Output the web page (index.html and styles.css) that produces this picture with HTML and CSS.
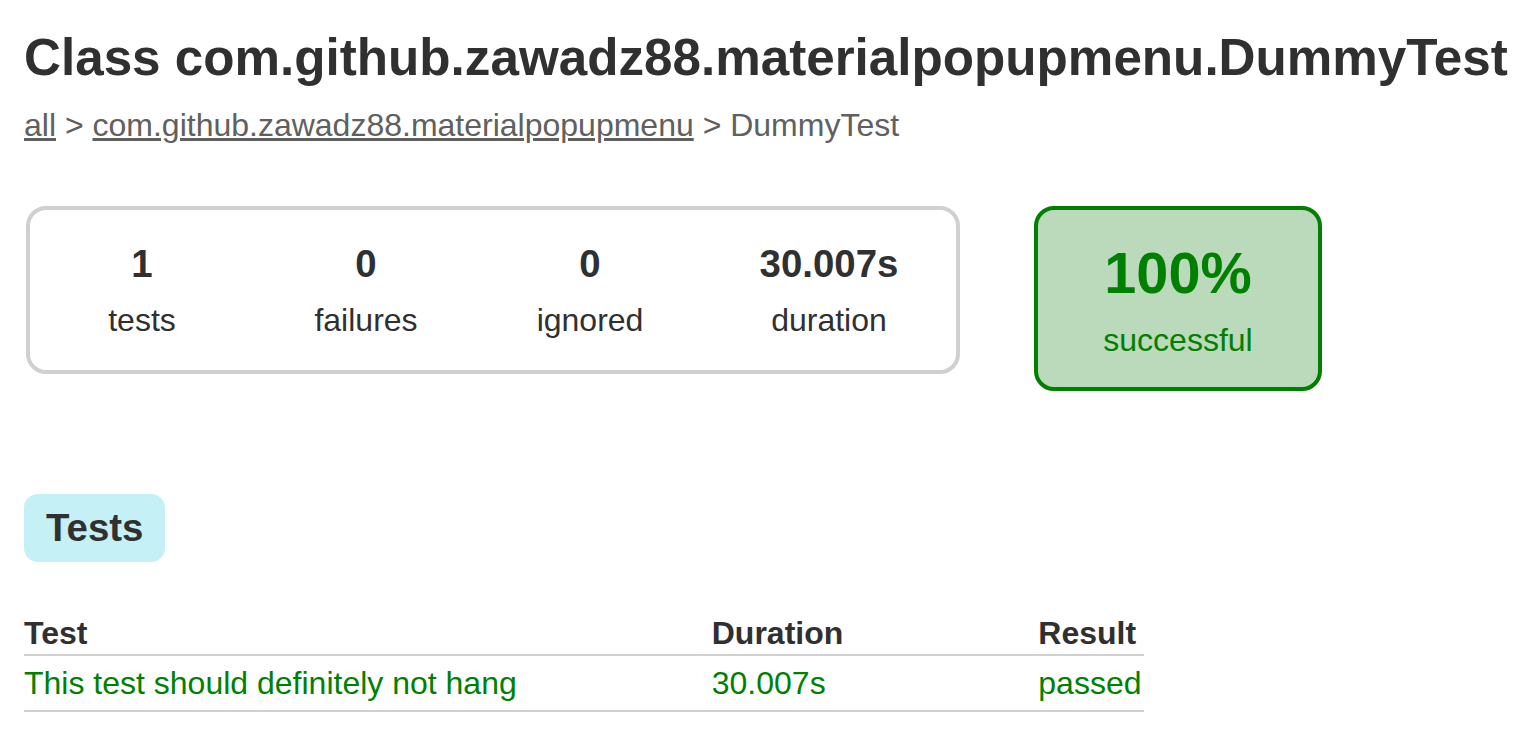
FILE: index.html
```html
<!DOCTYPE html>
<html lang="en">
<head>
    <meta charset="UTF-8">
    <meta name="viewport" content="width=device-width, initial-scale=1.0">
    <title>Test results - Class com.github.zawadz88.materialpopupmenu.DummyTest</title>
    <link rel="stylesheet" href="styles.css">
</head>
<body>
<div id="content">
    <h1>Class com.github.zawadz88.materialpopupmenu.DummyTest</h1>
    <div class="breadcrumbs">
        <a href="#">all</a> &gt;
        <a href="#">com.github.zawadz88.materialpopupmenu</a> &gt; DummyTest
    </div>

    <div id="summary">
        <table class="summaryTable">
            <tr>
                <td>
                    <div class="summaryGroup">
                        <table>
                            <tr>
                                <td>
                                    <div class="infoBox" id="tests">
                                        <div class="counter">1</div>
                                        <p>tests</p>
                                    </div>
                                </td>
                                <td>
                                    <div class="infoBox" id="failures">
                                        <div class="counter">0</div>
                                        <p>failures</p>
                                    </div>
                                </td>
                                <td>
                                    <div class="infoBox" id="ignored">
                                        <div class="counter">0</div>
                                        <p>ignored</p>
                                    </div>
                                </td>
                                <td>
                                    <div class="infoBox" id="duration">
                                        <div class="counter">30.007s</div>
                                        <p>duration</p>
                                    </div>
                                </td>
                            </tr>
                        </table>
                    </div>
                </td>
                <td>
                    <div class="infoBox success" id="successRate">
                        <div class="percent">100%</div>
                        <p>successful</p>
                    </div>
                </td>
            </tr>
        </table>
    </div>

    <ul class="tabLinks">
        <li class="selected"><a href="#tab0">Tests</a></li>
    </ul>

    <div id="tab0" class="tab">
        <table>
            <thead>
                <tr>
                    <th>Test</th>
                    <th>Duration</th>
                    <th>Result</th>
                </tr>
            </thead>
            <tbody>
                <tr>
                    <td class="success">This test should definitely not hang</td>
                    <td class="success">30.007s</td>
                    <td class="success">passed</td>
                </tr>
            </tbody>
        </table>
    </div>
</div>
</body>
</html>
```

FILE: styles.css
```css
body {
    margin: 0;
    padding: 0;
    font-family: "Liberation Sans", Arial, sans-serif;
    font-size: 32px;
}

body, a, a:visited {
    color: #303030;
}

#content {
    padding: 0 24px;
}

#content h1 {
    font-size: 160%;
    margin: 28px 0 20px;
    white-space: nowrap;
}

.breadcrumbs, .breadcrumbs a {
    color: #606060;
}

#summary {
    margin-top: 60px;
    margin-bottom: 80px;
}

#summary table {
    border-collapse: collapse;
}

#summary td {
    vertical-align: top;
    padding: 2px;
}

.infoBox {
    width: 220px;
    padding-top: 30px;
    padding-bottom: 30px;
    text-align: center;
}

.infoBox p {
    margin: 0;
}

.counter, .percent {
    font-size: 120%;
    font-weight: bold;
    margin-bottom: 16px;
}

#duration {
    width: 250px;
}

.summaryGroup .infoBox {
    padding-bottom: 29px;
}

#successRate, .summaryGroup {
    border: solid 4px #d0d0d0;
    border-radius: 20px;
}

#successRate {
    width: 280px;
    margin-left: 70px;
    padding-bottom: 28px;
}

#successRate .percent {
    font-size: 180%;
}

.success, .success a {
    color: #008000;
}

#successRate.success {
    background-color: #bbd9bb;
    border-color: #008000;
}

ul.tabLinks {
    margin: 32px 0 31px;
    padding: 21px 0 20px;
    overflow: auto;
    min-width: 800px;
}

ul.tabLinks li {
    float: left;
    list-style: none;
    padding: 10px 20px;
    border-radius: 14px;
    margin-right: 50px;
    border: solid 2px #d4d4d4;
    background-color: #f0f0f0;
}

ul.tabLinks li.selected {
    background-color: #c5f0f5;
    border-color: #c5f0f5;
}

ul.tabLinks a {
    font-size: 120%;
    font-weight: bold;
    display: block;
    text-decoration: none;
}

div.tab table {
    min-width: 700px;
    border-collapse: collapse;
    border-bottom: solid #d0d0d0 2px;
}

div.tab th {
    text-align: left;
    white-space: nowrap;
    padding: 2px 3px 2px 192px;
    border-bottom: solid #d0d0d0 2px;
}

div.tab td {
    white-space: nowrap;
    padding: 9px 3px 8px 192px;
}

div.tab th:first-child, div.tab td:first-child {
    padding-left: 0;
}
```
